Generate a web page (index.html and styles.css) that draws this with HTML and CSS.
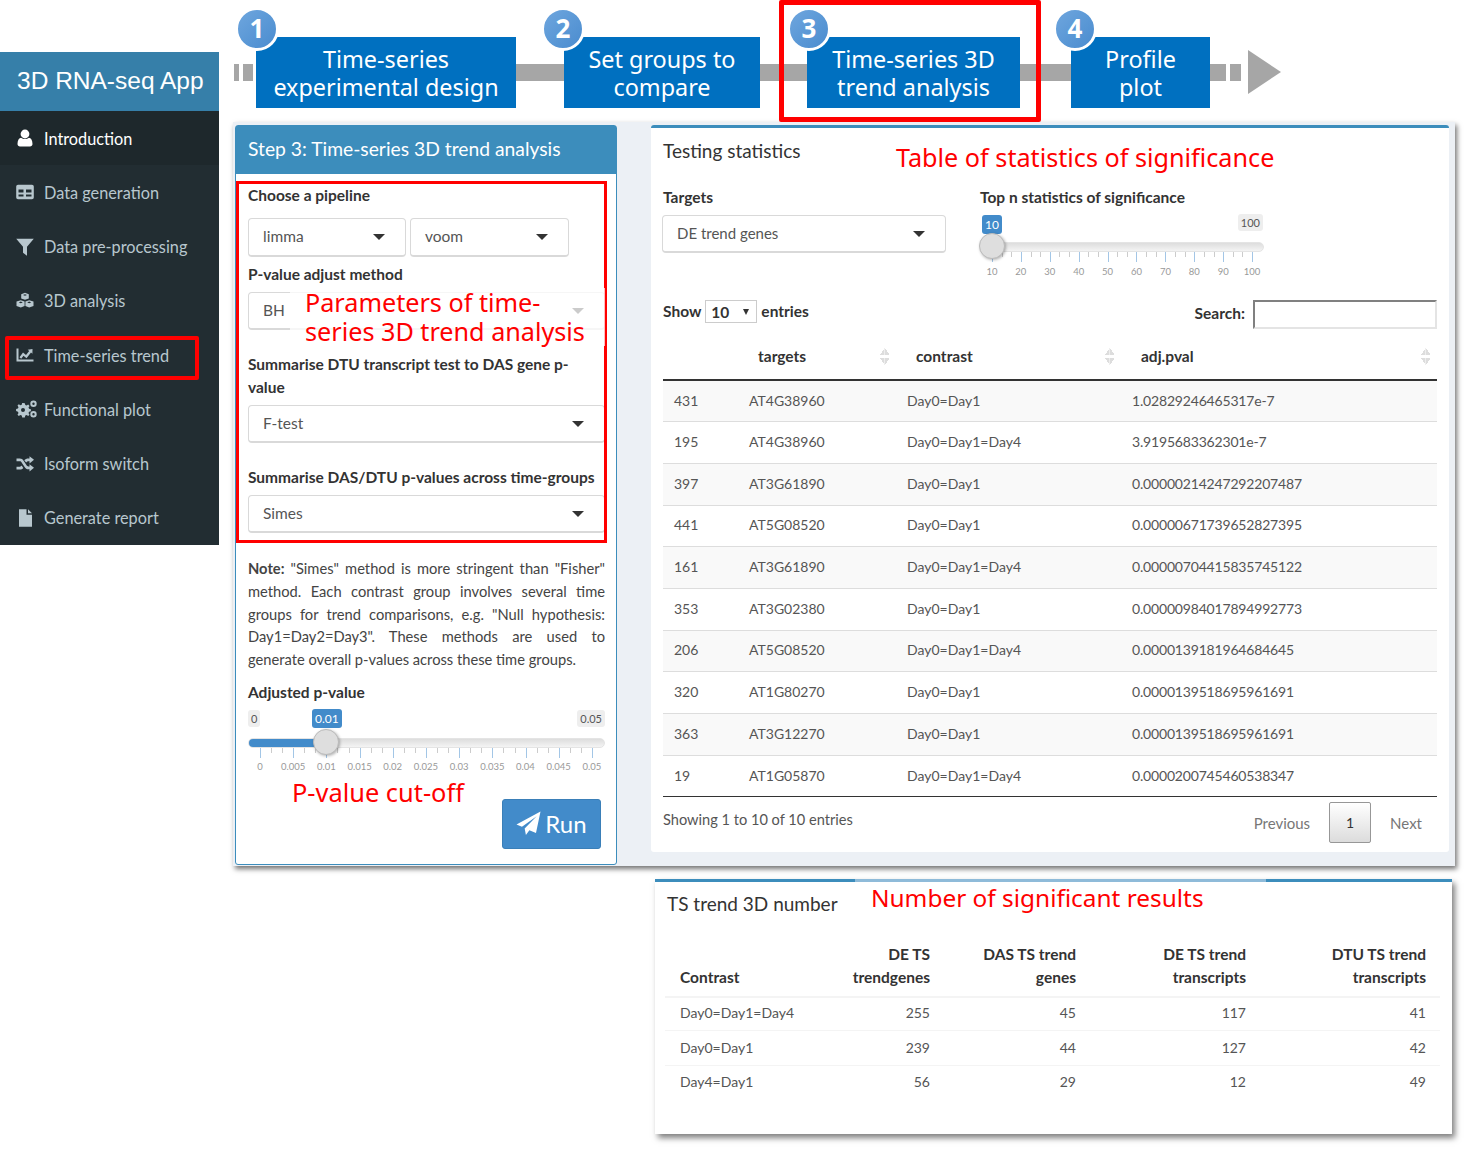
FILE: index.html
```html
<!DOCTYPE html>
<html lang="en">
<head>
    <meta charset="UTF-8">
    <title>3D RNA-seq App</title>
    <link rel="stylesheet" href="styles.css">
</head>
<body>
<div class="page">
    <aside class="sidebar">
        <div class="logo">3D RNA-seq App</div>
        <ul class="menu">
            <li class="active"><svg viewBox="0 0 18 18"><circle cx="9" cy="5" r="4.4"/><path d="M1.5 15c0-4 1.5-6 3.6-6.3 1 .9 2.400 1.400 3.900 1.400s2.900-.5 3.900-1.400c2.100.3 3.600 2.300 3.600 6.300 0 1.600-1.100 2.500-2.500 2.500H4c-1.400 0-2.500-.9-2.500-2.500z"/></svg>Introduction</li>
            <li><svg viewBox="0 0 18 18"><path fill-rule="evenodd" d="M2 1.800h14a1.800 1.800 0 0 1 1.800 1.800v10.800a1.800 1.800 0 0 1-1.800 1.800H2A1.800 1.800 0 0 1 .2 14.400V3.600A1.800 1.800 0 0 1 2 1.800zM2.500 6.500v3h5v-3zm7.500 0v3h5.500v-3zm-7.500 5v2h5v-2zm7.500 0v2h5.500v-2z"/></svg>Data generation</li>
            <li><svg viewBox="0 0 18 18"><path d="M.2.800h17.600L11 8.800v9L7 14.800v-6z"/></svg>Data pre-processing</li>
            <li><svg viewBox="0 0 18 18"><path fill-rule="evenodd" d="M9 .8l3.800 1.400v4.200L9 7.800 5.200 6.400V2.200zM9 2.200L7 3l2 .8 2-.8zM4.800 8.200l3.800 1.400v4.400l-3.800 1.600L.5 14v-4.400zm0 1.400l-2 .8 2 .8 2-.8zM13.200 8.200l4.300 1.400V14l-4.300 1.600L9.400 14V9.600zm0 1.400l-2 .8 2 .8 2-.8z"/></svg>3D analysis</li>
            <li><svg viewBox="0 0 18 18"><path d="M.5 2.500h2v11h15v2H.5z"/><path d="M3.500 11.200l3.500-4.600 3 2.400 3.200-4-1.500-1.300 4.800-.8-.1 4.800-1.400-1.300-4.500 5.800-3-2.400-2.300 3z"/></svg>Time-series trend</li>
            <li class="wide"><svg viewBox="0 0 22 18"><path d="M7 3l1.800.2.500 1.800 1.300.6 1.600-1 1.300 1.300-1 1.600.6 1.300 1.800.5v2l-1.800.5-.6 1.300 1 1.600-1.300 1.300-1.600-1-1.300.6-.5 1.800H6.200l-.5-1.800-1.300-.6-1.600 1-1.300-1.300 1-1.600-.6-1.300L.1 11V9l1.800-.5.600-1.300-1-1.600 1.300-1.300 1.600 1 1.300-.6.500-1.800zm0 5a2 2 0 1 0 0 4 2 2 0 0 0 0-4z" fill-rule="evenodd"/><path d="M17.500 .5a3.200 3.200 0 1 1 0 6.400 3.200 3.200 0 0 1 0-6.400zm0 2a1.200 1.200 0 1 0 0 2.400 1.200 1.200 0 0 0 0-2.400zM17.500 11a3.200 3.200 0 1 1 0 6.400 3.200 3.200 0 0 1 0-6.400zm0 2a1.200 1.200 0 1 0 0 2.400 1.200 1.200 0 0 0 0-2.400z" fill-rule="evenodd"/></svg>Functional plot</li>
            <li><svg viewBox="0 0 18 18"><path d="M.5 3.500h3.300c1.800 0 2.800.9 3.800 2.300l2.800 4.200c.7 1 1.200 1.400 2.100 1.400h1V9.200l4.500 3.600-4.500 3.600v-2.200h-1c-1.900 0-2.900-.9-3.900-2.300L5.800 7.700C5.100 6.700 4.700 6.300 3.800 6.300H.5z"/><path d="M.5 11.700h3.300c.9 0 1.300-.4 1.800-1.100l1.700 2.400c-.9 1-2 1.500-3.500 1.500H.5zM8.300 5.200c1-1 2.300-1.700 4.200-1.700h1V1.200L18 4.800l-4.500 3.600V6.300h-1c-.9 0-1.500.4-2.400 1.300z"/></svg>Isoform switch</li>
            <li><svg viewBox="0 0 18 18"><path d="M3 .3h7.500v5.500H16v11.900H3zM12 .3l4 4h-4z"/></svg>Generate report</li>
        </ul>
    </aside>

    <main class="main">
        <div class="steps">
            <span class="seg seg-a"></span>
            <span class="seg seg-b"></span>
            <div class="step step-1"><span class="num">1</span>Time-series<br>experimental design</div>
            <span class="bar"></span>
            <div class="step step-2"><span class="num">2</span>Set groups to<br>compare</div>
            <span class="bar"></span>
            <div class="step step-3"><span class="num">3</span>Time-series 3D<br>trend analysis</div>
            <span class="bar"></span>
            <div class="step step-4"><span class="num">4</span>Profile<br>plot</div>
            <span class="bar bar-end"></span>
            <span class="seg seg-c"></span>
            <span class="arrow"></span>
        </div>

        <div class="content">
            <section class="side-panel">
                <h2 class="side-title">Step 3: Time-series 3D trend analysis</h2>
                <div class="side-body">
                    <label class="lbl lbl-first">Choose a pipeline</label>
                    <div class="pair">
                        <div class="select pipe-a">limma<i class="caret"></i></div>
                        <div class="select pipe-b">voom<i class="caret"></i></div>
                    </div>
                    <label class="lbl lbl-pval">P-value adjust method</label>
                    <div class="select">BH<i class="caret"></i></div>
                    <label class="lbl lbl-dtu">Summarise DTU transcript test to DAS gene p-value</label>
                    <div class="select">F-test<i class="caret"></i></div>
                    <label class="lbl lbl-das">Summarise DAS/DTU p-values across time-groups</label>
                    <div class="select">Simes<i class="caret"></i></div>
                    <p class="note"><b>Note:</b> "Simes" method is more stringent than "Fisher" method. Each contrast group involves several time groups for trend comparisons, e.g. "Null hypothesis: Day1=Day2=Day3". These methods are used to generate overall p-values across these time groups.</p>
                    <label class="lbl lbl-adj">Adjusted p-value</label>
                    <div class="slider slider-p">
                        <span class="edge edge-min">0</span>
                        <span class="edge edge-max">0.05</span>
                        <span class="value">0.01</span>
                        <div class="track"><div class="fill"></div></div>
                        <div class="ticks"></div>
                        <div class="tick-labels">
                            <span>0</span><span>0.005</span><span>0.01</span><span>0.015</span><span>0.02</span><span>0.025</span><span>0.03</span><span>0.035</span><span>0.04</span><span>0.045</span><span>0.05</span>
                        </div>
                        <div class="handle"></div>
                    </div>
                    <div class="run-row">
                        <button class="run"><svg viewBox="0 0 26 26"><path d="M25.500 .5L20.800 22.800 13.900 19.900 10.300 25 9 18.200 21.500 5.500 6.200 16.400.5 14z"/></svg>Run</button>
                    </div>
                </div>
            </section>

            <section class="panel">
                <h3 class="panel-title">Testing statistics</h3>
                <div class="filters">
                    <div class="filter-targets">
                        <label class="lbl">Targets</label>
                        <div class="select">DE trend genes<i class="caret"></i></div>
                    </div>
                    <div class="filter-top">
                        <label class="lbl">Top n statistics of significance</label>
                        <div class="slider slider-n">
                            <span class="edge edge-max">100</span>
                            <span class="value">10</span>
                            <div class="track"></div>
                            <div class="ticks"></div>
                            <div class="tick-labels">
                                <span>10</span><span>20</span><span>30</span><span>40</span><span>50</span><span>60</span><span>70</span><span>80</span><span>90</span><span>100</span>
                            </div>
                            <div class="handle"></div>
                        </div>
                    </div>
                </div>

                <div class="table-tools">
                    <div class="show">Show <span class="show-select">10<i class="mini-caret"></i></span> entries</div>
                    <div class="search">Search: <span class="search-input"></span></div>
                </div>

                <table class="stats">
                    <thead>
                        <tr>
                            <th class="c-id"></th>
                            <th class="c-target">targets<i class="sort"></i></th>
                            <th class="c-contrast">contrast<i class="sort"></i></th>
                            <th>adj.pval<i class="sort"></i></th>
                        </tr>
                    </thead>
                    <tbody>
                        <tr><td>431</td><td>AT4G38960</td><td>Day0=Day1</td><td>1.02829246465317e-7</td></tr>
                        <tr><td>195</td><td>AT4G38960</td><td>Day0=Day1=Day4</td><td>3.9195683362301e-7</td></tr>
                        <tr><td>397</td><td>AT3G61890</td><td>Day0=Day1</td><td>0.00000214247292207487</td></tr>
                        <tr><td>441</td><td>AT5G08520</td><td>Day0=Day1</td><td>0.00000671739652827395</td></tr>
                        <tr><td>161</td><td>AT3G61890</td><td>Day0=Day1=Day4</td><td>0.00000704415835745122</td></tr>
                        <tr><td>353</td><td>AT3G02380</td><td>Day0=Day1</td><td>0.00000984017894992773</td></tr>
                        <tr><td>206</td><td>AT5G08520</td><td>Day0=Day1=Day4</td><td>0.0000139181964684645</td></tr>
                        <tr><td>320</td><td>AT1G80270</td><td>Day0=Day1</td><td>0.0000139518695961691</td></tr>
                        <tr><td>363</td><td>AT3G12270</td><td>Day0=Day1</td><td>0.0000139518695961691</td></tr>
                        <tr><td>19</td><td>AT1G05870</td><td>Day0=Day1=Day4</td><td>0.0000200745460538347</td></tr>
                    </tbody>
                </table>

                <div class="table-foot">
                    <div class="showing">Showing 1 to 10 of 10 entries</div>
                    <div class="pager"><span>Previous</span><span class="page-btn">1</span><span>Next</span></div>
                </div>
            </section>
        </div>

        <section class="number-box">
            <h3 class="number-title">TS trend 3D number</h3>
            <table class="numbers">
                <thead>
                    <tr><th>Contrast</th><th>DE TS<br>trendgenes</th><th>DAS TS trend<br>genes</th><th>DE TS trend<br>transcripts</th><th>DTU TS trend<br>transcripts</th></tr>
                </thead>
                <tbody>
                    <tr><td>Day0=Day1=Day4</td><td>255</td><td>45</td><td>117</td><td>41</td></tr>
                    <tr><td>Day0=Day1</td><td>239</td><td>44</td><td>127</td><td>42</td></tr>
                    <tr><td>Day4=Day1</td><td>56</td><td>29</td><td>12</td><td>49</td></tr>
                </tbody>
            </table>
        </section>
    </main>

    <!-- red call-outs drawn over the screenshot -->
    <div class="mark mark-menu"></div>
    <div class="mark mark-step"></div>
    <div class="mark mark-form"></div>
    <div class="note-red red-params">Parameters of time-<br>series 3D trend analysis</div>
    <div class="note-red red-table">Table of statistics of significance</div>
    <div class="note-red red-cutoff">P-value cut-off</div>
    <div class="note-red red-number">Number of significant results</div>
</div>
</body>
</html>
```

FILE: styles.css
```css
* {
    margin: 0;
    padding: 0;
    box-sizing: border-box;
}

body {
    background: white;
    font-family: Lato, "Noto Sans", sans-serif;
    font-size: 15.5px;
    color: #333;
}

.page {
    position: relative;
    display: flex;
    width: 1476px;
    height: 1149px;
    overflow: hidden;
}

/* sidebar */
.sidebar {
    width: 219px;
    height: 493px;
    margin-top: 52px;
    flex: none;
    background: #222d32;
}

.logo {
    height: 59px;
    line-height: 58px;
    padding-left: 17px;
    background: #367fa9;
    color: white;
    font-family: "Liberation Sans", sans-serif;
    font-size: 24.5px;
}

.menu {
    list-style: none;
}

.menu li {
    display: flex;
    align-items: center;
    height: 54.25px;
    padding-left: 16px;
    color: #b8c7ce;
    font-size: 16.3px;
}

.menu li.active {
    background: #1e282c;
    color: white;
}

.menu svg {
    width: 18px;
    height: 18px;
    margin-right: 10px;
    fill: currentColor;
    flex: none;
}

.menu li.wide svg {
    width: 22px;
    margin-right: 6px;
}

/* step bar */
.main {
    width: 1222px;
    margin-left: 14px;
    flex: none;
}

.steps {
    display: flex;
    align-items: center;
    height: 122px;
    padding-top: 23px;
    padding-left: 1px;
}

.seg, .bar {
    height: 17px;
    background: #a6a6a6;
    flex: none;
}

.seg-a {
    width: 5px;
    margin-right: 4px;
}

.seg-b {
    width: 10px;
    margin-right: 3px;
}

.seg-c {
    width: 11px;
    margin-left: 4px;
    margin-right: 7px;
}

.bar {
    width: 48px;
}

.bar-end {
    width: 16px;
}

.arrow {
    width: 0;
    height: 0;
    margin-top: -1px;
    border-left: 33px solid #a6a6a6;
    border-top: 22px solid transparent;
    border-bottom: 22px solid transparent;
}

.step {
    position: relative;
    height: 71px;
    padding-top: 8px;
    flex: none;
    background: #0070c0;
    color: white;
    font-family: "Noto Sans", sans-serif;
    font-size: 23.4px;
    line-height: 28px;
    text-align: center;
}

.step-1 { width: 260px; }
.step-2 { width: 196px; }
.step-3 { width: 213px; }
.step-4 { width: 139px; }

.step-3 + .bar { width: 51px; }
.step-2 + .bar { width: 47px; }

.num {
    position: absolute;
    left: -21px;
    top: -30px;
    width: 44px;
    height: 44px;
    border: 3px solid white;
    border-radius: 50%;
    background: linear-gradient(135deg, #6ea6de, #4a8ccf);
    font-family: "Noto Sans", sans-serif;
    font-weight: bold;
    font-size: 26px;
    line-height: 36px;
}

.step-2 .num { left: -23px; }
.step-3 .num { left: -20px; }
.step-4 .num { left: -18px; }

/* content */
.content {
    display: flex;
    align-items: flex-start;
    height: 744px;
    padding: 3px 6px 0 2px;
    background: #ecf0f5;
    box-shadow: 2px 3px 5px rgba(0, 0, 0, 0.55);
}

.side-panel {
    width: 382px;
    height: 740px;
    background: white;
    border: 1px solid #3c8dbc;
    border-radius: 3px;
}

.side-title {
    height: 48px;
    padding-left: 12px;
    background: #3c8dbc;
    color: white;
    font-size: 19.3px;
    font-weight: normal;
    line-height: 45px;
}

.side-body {
    padding: 10px 11px 0 12px;
}

.lbl {
    display: block;
    font-size: 15.500px;
    font-weight: bold;
    line-height: 22px;
    margin-bottom: 7px;
}

.lbl-first { margin-bottom: 12px; }
.lbl-pval { margin-top: 6px; }
.lbl-dtu { margin-top: 23px; margin-bottom: 6px; line-height: 23px; }
.lbl-das { margin-top: 23px; margin-bottom: 7px; white-space: nowrap; }
.lbl-adj { margin-top: 10px; margin-bottom: 5px; }

.select {
    position: relative;
    height: 38px;
    padding-left: 14px;
    background: white;
    border: 1px solid #d9d9d9;
    border-bottom-width: 2px;
    border-radius: 4px;
    color: #555;
    line-height: 34px;
}

.pair {
    display: flex;
    gap: 4px;
}

.pipe-a, .pipe-b {
    width: 158px;
    height: 39px;
}

.pipe-b {
    width: 159px;
}

.caret {
    position: absolute;
    right: 20px;
    top: 15px;
    border-top: 6px solid #333;
    border-left: 6px solid transparent;
    border-right: 6px solid transparent;
}

.note {
    margin-top: 24px;
    color: #444;
    font-size: 14.7px;
    line-height: 22.8px;
    text-align: justify;
}

/* range slider */
.slider {
    position: relative;
    height: 67px;
}

.edge, .value {
    position: absolute;
    top: 2px;
    padding: 0 3px;
    height: 17px;
    border-radius: 3px;
    background: #eee;
    color: #555;
    font-size: 11px;
    line-height: 17px;
}

.value {
    top: 1px;
    height: 19px;
    background: #428bca;
    color: white;
    font-size: 12px;
    line-height: 20px;
    padding: 0 3px;
}

.edge-min { left: 0; }
.edge-max { right: 0; }

.track {
    position: absolute;
    top: 30px;
    left: 0;
    right: 0;
    height: 10px;
    background: linear-gradient(#ddd, #f4f4f4);
    border: 1px solid #e4e4e4;
    border-radius: 5px;
    overflow: hidden;
}

.fill {
    width: 78px;
    height: 100%;
    background: #428bca;
}

.handle {
    position: absolute;
    top: 21px;
    width: 26px;
    height: 26px;
    border: 1px solid #bbb;
    border-radius: 50%;
    background: #dedede;
    box-shadow: 1px 1px 3px rgba(0, 0, 0, 0.3);
}

.ticks {
    position: absolute;
    top: 40px;
    height: 10px;
    background-repeat: no-repeat;
}

.tick-labels {
    position: absolute;
    top: 53px;
    display: flex;
    color: #999;
    font-size: 9.500px;
    line-height: 12px;
}

.tick-labels span {
    flex: 1;
    text-align: center;
}

.slider-p .value { left: 64px; }
.slider-p .handle { left: 65px; }
.slider-p .ticks {
    left: 12px;
    width: 333px;
    background-image:
        repeating-linear-gradient(90deg, #a3c6e6 0 1px, transparent 1px 33.200px),
        repeating-linear-gradient(90deg, #ccc 0 1px, transparent 1px 11.067px);
    background-size: 100% 10px, 100% 5px;
}
.slider-p .tick-labels { left: -4.600px; width: 365px; }

.slider-n { height: 63px; margin-top: -1px; }
.slider-n .edge-max { right: 1px; top: -1px; }
.slider-n .value { left: 2px; top: 0; }
.slider-n .track { top: 27px; }
.slider-n .handle { left: -1px; top: 18px; }
.slider-n .ticks {
    top: 37px;
    left: 12px;
    width: 261px;
    background-image:
        repeating-linear-gradient(90deg, #a3c6e6 0 1px, transparent 1px 28.900px),
        repeating-linear-gradient(90deg, #ccc 0 1px, transparent 1px 9.633px);
    background-size: 100% 10px, 100% 5px;
}
.slider-n .tick-labels { top: 51px; left: -2.500px; width: 289px; }

.run-row {
    display: flex;
    justify-content: flex-end;
    margin-top: 24px;
    padding-right: 4px;
}

.run {
    display: flex;
    align-items: center;
    justify-content: center;
    gap: 4px;
    width: 99px;
    height: 50px;
    background: #428bca;
    border: 1px solid #3a7fb8;
    border-radius: 3px;
    color: white;
    font-family: inherit;
    font-size: 24px;
}

.run svg {
    width: 25px;
    height: 25px;
    fill: white;
}

/* statistics panel */
.panel {
    width: 798px;
    height: 727px;
    margin-left: 34px;
    padding: 10px 12px 0;
    background: white;
    border-top: 3px solid #3c8dbc;
    border-radius: 3px;
}

.panel-title, .number-title {
    font-size: 19px;
    font-weight: normal;
    line-height: 26px;
}

.filters {
    display: flex;
    height: 92px;
    margin-top: 22px;
}

.filter-targets {
    width: 284px;
    margin-left: -1px;
    margin-right: 1px;
}

.filter-targets .lbl { margin-bottom: 7px; margin-left: 1px; }

.filter-targets .select { font-size: 15px; }

.filter-top {
    width: 284px;
    margin-left: 33px;
}

.filter-top .lbl { margin-bottom: 8px; }

.table-tools {
    display: flex;
    justify-content: space-between;
    align-items: flex-start;
    height: 29px;
    margin-top: 22px;
    font-weight: bold;
}

.show {
    display: flex;
    align-items: center;
    gap: 4px;
    line-height: 23px;
}

.show-select {
    position: relative;
    width: 52px;
    height: 23px;
    padding-left: 5px;
    border: 1px solid #ccc;
    background: white;
}

.mini-caret {
    position: absolute;
    right: 7px;
    top: 8px;
    border-top: 6px solid #333;
    border-left: 3px solid transparent;
    border-right: 3px solid transparent;
}

.search {
    display: flex;
    align-items: flex-start;
    gap: 8px;
    line-height: 27px;
}

.search-input {
    width: 184px;
    height: 29px;
    border: 2px solid #e4e4e4;
    border-top-color: #808080;
    border-left-color: #808080;
}

.stats {
    width: 774px;
    margin-top: 8px;
    border-collapse: collapse;
    table-layout: fixed;
    font-size: 14px;
}

.stats th {
    position: relative;
    height: 43px;
    padding-left: 20px;
    padding-bottom: 4px;
    border-bottom: 2px solid #333;
    text-align: left;
    font-size: 15.500px;
}

.c-id { width: 75px; }
.c-target { width: 158px; }
.c-contrast { width: 225px; }

.stats td {
    height: 41.700px;
    padding-left: 11px;
    padding-bottom: 2px;
    border-top: 1px solid #ddd;
    color: #555;
}

.stats td:last-child {
    letter-spacing: -0.18px;
}

.stats tbody tr:nth-child(odd) {
    background: #f9f9f9;
}

.stats tbody tr:first-child td {
    border-top: none;
}

.stats tbody tr:last-child td {
    border-bottom: 1px solid #333;
}

.sort {
    position: absolute;
    right: 7px;
    top: 11px;
    width: 9px;
    height: 18px;
    background:
        linear-gradient(to bottom right, transparent 50%, #ddd 50%) 0 0 / 4.500px 7px no-repeat,
        linear-gradient(to bottom left, transparent 50%, #ddd 50%) 4.500px 0 / 4.500px 7px no-repeat,
        linear-gradient(to top right, transparent 50%, #ddd 50%) 0 10px / 4.500px 7px no-repeat,
        linear-gradient(to top left, transparent 50%, #ddd 50%) 4.500px 10px / 4.500px 7px no-repeat;
}

.table-foot {
    display: flex;
    justify-content: space-between;
    align-items: flex-start;
    color: #555;
}

.showing {
    margin-top: 12px;
    font-size: 14.6px;
    line-height: 22px;
}

.pager {
    display: flex;
    align-items: center;
    gap: 19px;
    margin-top: 5px;
    padding-right: 15px;
    color: #777;
    font-size: 15px;
}

.page-btn {
    width: 42px;
    height: 41px;
    border: 1px solid #979797;
    border-radius: 2px;
    background: linear-gradient(#fff, #dcdcdc);
    color: #333;
    font-size: 14px;
    line-height: 39px;
    text-align: center;
}

/* number table */
.number-box {
    width: 797px;
    height: 255px;
    margin-top: 13px;
    margin-left: 422px;
    padding: 9px 12px 0 10px;
    background: white;
    border-top: 3px solid;
    border-image: linear-gradient(90deg, #3c8dbc 200px, #8fbbd9 200px, #8fbbd9 610px, #3c8dbc 610px) 1;
    border-left: none;
    border-right: none;
    box-shadow: 3px 4px 6px rgba(0, 0, 0, 0.5);
}

.number-title {
    margin-left: 2px;
}

.numbers {
    width: 775px;
    margin-top: 26px;
    border-collapse: collapse;
    table-layout: fixed;
    font-size: 14px;
}

.numbers th {
    padding: 0 14px 7px;
    border-bottom: 2px solid #f4f4f4;
    font-size: 15.500px;
    line-height: 22.800px;
    text-align: right;
    vertical-align: bottom;
}

.numbers td {
    height: 34.300px;
    padding: 0 14px 2px;
    border-top: 1px solid #f4f4f4;
    color: #555;
    text-align: right;
}

.numbers th:first-child, .numbers td:first-child {
    width: 155px;
    padding-left: 15px;
    padding-right: 0;
    text-align: left;
}

.numbers th:nth-child(2) { width: 124px; }
.numbers th:nth-child(3) { width: 146px; }
.numbers th:nth-child(4) { width: 170px; }
.numbers th:nth-child(5) { width: 180px; }

/* call-outs */
.mark {
    position: absolute;
    border: 4px solid #f00;
}

.mark-menu {
    left: 5px;
    top: 336px;
    width: 194px;
    height: 44px;
    border-radius: 2px;
}

.mark-step {
    left: 779px;
    top: 0;
    width: 262px;
    height: 122px;
    border-width: 5px;
    border-radius: 2px;
}

.mark-form {
    left: 236px;
    top: 181px;
    width: 371px;
    height: 362px;
    border-width: 3px;
}

.note-red {
    position: absolute;
    color: #f00;
    font-family: "Noto Sans", sans-serif;
    font-size: 25.2px;
    white-space: nowrap;
}

.red-params {
    left: 290px;
    top: 288px;
    width: 315px;
    padding-left: 15px;
    background: rgba(255, 255, 255, 0.75);
    line-height: 29px;
}

.red-table { left: 896px; top: 140px; line-height: 34px; }
.red-cutoff { left: 292px; top: 775px; line-height: 34px; font-size: 25.4px; }
.red-number { left: 871px; top: 881px; line-height: 34px; font-size: 24.4px; }
```
